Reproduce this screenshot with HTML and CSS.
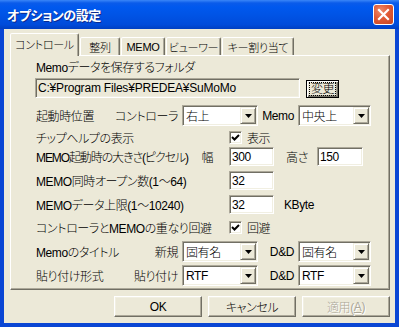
FILE: index.html
```html
<!DOCTYPE html>
<html>
<head>
  <meta charset="utf-8"/>
  <link rel="stylesheet" href="styles.css">
</head>
<body>
  <div class="window">
    <div class="titlebar">
      <span class="title">オプションの設定</span>
      <span class="close">
        <svg width="19" height="19" viewBox="0 0 19 19"><path d="M5 5L14 14M14 5L5 14" stroke="#fff" stroke-width="2.2" stroke-linecap="square"/></svg>
      </span>
    </div>

    <div class="client">
      <div class="tabs">
        <div class="tab active t-ctrl">コントロール</div>
        <div class="tab t-align">整列</div>
        <div class="tab t-memo">MEMO</div>
        <div class="tab t-view">ビューワー</div>
        <div class="tab t-keys">キー割り当て</div>
      </div>

      <div class="panel">
        <div class="row line gap2">Memoデータを保存するフォルダ</div>

        <div class="row path-row gap4">
          <div class="field path sunken">C:¥Program Files¥PREDEA¥SuMoMo</div>
          <div class="btn small"><span class="focus">変更</span></div>
        </div>

        <div class="row combo-row gap7">
          <div class="cap pick"><span>起動時位置</span><span>コントローラ</span></div>
          <div class="combo c1 sunken"><span>右上</span><i class="drop"><svg width="7" height="4"><polygon points="0,0 7,0 3.5,4"/></svg></i></div>
          <div class="sub">Memo</div>
          <div class="combo c2 sunken"><span>中央上</span><i class="drop"><svg width="7" height="4"><polygon points="0,0 7,0 3.5,4"/></svg></i></div>
        </div>

        <div class="row line gap3">
          <div class="cap wide">チップヘルプの表示</div>
          <span class="check sunken"><svg width="11" height="11"><polyline points="2,5 4.5,7.5 9,3" fill="none" stroke="#000" stroke-width="2"/></svg></span>
          <span class="check-label">表示</span>
        </div>

        <div class="row edit-row gap2">
          <div class="cap wide split"><span class="tight">MEMO起動時の大きさ(ピクセル)</span><span>幅</span></div>
          <div class="edit sunken">300</div>
          <span class="unit">高さ</span>
          <div class="edit tall sunken">150</div>
        </div>

        <div class="row edit-row gap5">
          <div class="cap wide">MEMO同時オープン数(1～64)</div>
          <div class="edit sunken">32</div>
        </div>

        <div class="row edit-row gap5">
          <div class="cap wide">MEMOデータ上限(1～10240)</div>
          <div class="edit sunken">32</div>
          <span class="kbyte">KByte</span>
        </div>

        <div class="row line gap5">
          <div class="cap wide">コントローラとMEMOの重なり回避</div>
          <span class="check sunken"><svg width="11" height="11"><polyline points="2,5 4.5,7.5 9,3" fill="none" stroke="#000" stroke-width="2"/></svg></span>
          <span class="check-label">回避</span>
        </div>

        <div class="row combo-row gap6">
          <div class="cap pick"><span>Memoのタイトル</span><span>新規</span></div>
          <div class="combo c1 sunken"><span>固有名</span><i class="drop"><svg width="7" height="4"><polygon points="0,0 7,0 3.5,4"/></svg></i></div>
          <div class="sub">D&amp;D</div>
          <div class="combo c2 sunken"><span>固有名</span><i class="drop"><svg width="7" height="4"><polygon points="0,0 7,0 3.5,4"/></svg></i></div>
        </div>

        <div class="row combo-row gap3">
          <div class="cap pick"><span>貼り付け形式</span><span>貼り付け</span></div>
          <div class="combo c1 sunken"><span>RTF</span><i class="drop"><svg width="7" height="4"><polygon points="0,0 7,0 3.5,4"/></svg></i></div>
          <div class="sub">D&amp;D</div>
          <div class="combo c2 sunken"><span>RTF</span><i class="drop"><svg width="7" height="4"><polygon points="0,0 7,0 3.5,4"/></svg></i></div>
        </div>
      </div>

      <div class="actions">
        <div class="btn">OK</div>
        <div class="btn">キャンセル</div>
        <div class="btn disabled">適用(<u>A</u>)</div>
      </div>
    </div>
  </div>
</body>
</html>
```

FILE: styles.css
```css
body {
  margin: 0;
  font-family: "Liberation Sans", "Noto Sans CJK JP", sans-serif;
  font-size: 12px;
  font-weight: 300;
  font-feature-settings: "palt";
  letter-spacing: -0.4px;
  color: #000;
}
.window {
  width: 399px;
  height: 327px;
  display: flex;
  flex-direction: column;
  background: #0A46D4;
}
.titlebar {
  height: 29px;
  flex: none;
  display: flex;
  align-items: center;
  justify-content: space-between;
  padding: 0 5px 0 7px;
  background: linear-gradient(#3A86F8 0, #0A5BEA 3px, #0058EE 7px, #0054E6 50%, #004BDA 85%, #003FC2 100%);
  color: #fff;
}
.title {
  font-family: "Noto Sans CJK JP", sans-serif;
  font-weight: bold;
  font-size: 13px;
  letter-spacing: -0.5px;
  text-shadow: 1px 1px #0C2A8E;
}
.close {
  width: 21px;
  height: 21px;
  box-sizing: border-box;
  border: 1px solid #fff;
  border-radius: 3px;
  background: radial-gradient(circle at 35% 30%, #EE8A6A 0, #E05A36 45%, #C8441F 100%);
  display: flex;
  align-items: center;
  justify-content: center;
}
.client {
  flex: 1;
  margin: 0 4px 4px;
  background: #ECE9D8;
  padding: 4px 5px 0 6px;
  display: flex;
  flex-direction: column;
}

/* tabs */
.tabs {
  display: flex;
  align-items: flex-end;
  height: 22px;
  position: relative;
  z-index: 1;
  font-size: 11px;
  letter-spacing: -0.3px;
}
.tab {
  height: 18px;
  box-sizing: border-box;
  margin-right: 1px;
  display: flex;
  align-items: center;
  justify-content: center;
  white-space: nowrap;
  border: 1px solid;
  border-bottom: none;
  border-color: #fff #716F64 transparent #fff;
  box-shadow: inset -1px 0 #ACA899;
  border-radius: 2px 2px 0 0;
  background: #ECE9D8;
}
.tab.active {
  height: 23px;
  margin-bottom: -1px;
  padding-bottom: 2px;
}
.t-ctrl { width: 69px; }
.t-align { width: 40px; }
.t-memo { width: 44px; }
.t-view { width: 55px; }
.t-keys { width: 72px; }

/* sunken / raised */
.sunken {
  border: 1px solid;
  border-color: #ACA899 #fff #fff #ACA899;
  box-shadow: inset 1px 1px #716F64, inset -1px -1px #F1EFE2;
}
.panel {
  height: 235px;
  box-sizing: border-box;
  border: 1px solid;
  border-color: #fff #716F64 #716F64 #fff;
  box-shadow: inset -1px -1px #ACA899;
  padding-left: 25px;
  display: flex;
  flex-direction: column;
}
.row {
  display: flex;
  align-items: center;
  flex: none;
  white-space: nowrap;
}
.line { height: 16px; }
.path-row { height: 20px; }
.combo-row { height: 21px; }
.edit-row { height: 19px; }
.gap2 { margin-top: 2px; }
.gap3 { margin-top: 3px; }
.gap4 { margin-top: 4px; }
.gap5 { margin-top: 5px; }
.gap6 { margin-top: 6px; }
.gap7 { margin-top: 7px; }

.field {
  height: 20px;
  box-sizing: border-box;
  display: flex;
  align-items: center;
  padding-left: 2px;
}
.path {
  width: 265px;
  margin-left: -1px;
  letter-spacing: -0.2px;
}
.cap {
  box-sizing: border-box;
  flex: none;
}
.pick {
  width: 146px;
  display: flex;
  justify-content: space-between;
  padding-right: 4px;
}
.wide { width: 193px; }
.split {
  display: flex;
  justify-content: space-between;
  padding-right: 16px;
}
.tight { letter-spacing: -1.1px; }
.sub {
  width: 40px;
  box-sizing: border-box;
  text-align: right;
  padding-right: 4px;
}
.combo {
  height: 21px;
  box-sizing: border-box;
  padding: 1px;
  background: #fff;
  display: flex;
  align-items: center;
  justify-content: space-between;
}
.combo span { padding-left: 2px; }
.c1 { width: 76px; }
.c2 { width: 73px; }
.drop {
  width: 16px;
  height: 17px;
  box-sizing: border-box;
  background: #ECE9D8;
  border: 1px solid;
  border-color: #F1EFE2 #716F64 #716F64 #F1EFE2;
  box-shadow: inset 1px 1px #fff, inset -1px -1px #ACA899;
  display: flex;
  align-items: center;
  justify-content: center;
}
.edit {
  width: 45px;
  height: 19px;
  box-sizing: border-box;
  background: #fff;
  padding-left: 2px;
  display: flex;
  align-items: center;
}
.edit.tall { width: 46px; }
.unit {
  margin-left: 12px;
  width: 31px;
}
.kbyte { margin-left: 10px; }
.check {
  width: 13px;
  height: 13px;
  box-sizing: border-box;
  background: #fff;
  display: flex;
}
.check-label { margin-left: 5px; }

/* buttons */
.btn {
  width: 88px;
  height: 21px;
  box-sizing: border-box;
  display: flex;
  align-items: center;
  justify-content: center;
  border: 1px solid;
  border-color: #fff #716F64 #716F64 #fff;
  box-shadow: inset -1px -1px #ACA899, inset 1px 1px #F1EFE2;
  background: #ECE9D8;
}
.btn.small {
  width: 33px;
  height: 18px;
  margin-left: 6px;
  align-self: flex-end;
  border-color: #000;
  box-shadow: inset 1px 1px #fff, inset -1px -1px #716F64, inset -2px -2px #ACA899;
}
.focus {
  outline: 1px dotted #000;
  line-height: 12px;
  padding: 0 1px;
}
.btn.disabled {
  color: #ACA899;
  text-shadow: 1px 1px #fff;
}
.actions {
  display: flex;
  justify-content: flex-end;
  gap: 6px;
  margin-top: 6px;
}
```
